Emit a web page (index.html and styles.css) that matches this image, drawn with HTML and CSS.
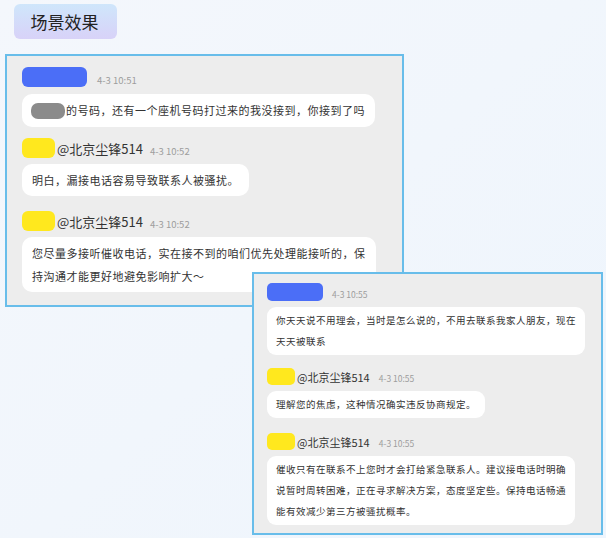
FILE: index.html
```html
<!DOCTYPE html>
<html lang="zh">
<head>
<meta charset="utf-8">
<link rel="stylesheet" href="styles.css">
</head>
<body>
<div class="page">
  <div class="title">场景效果</div>

  <div class="panel p1">
    <div class="msg">
      <div class="head"><span class="pill blue"></span><span class="time">4-3 10:51</span></div>
      <div class="bubble"><span class="mask"></span>的号码，还有一个座机号码打过来的我没接到，你接到了吗</div>
    </div>
    <div class="msg">
      <div class="head"><span class="pill yellow"></span><span class="name">@北京尘锋514</span><span class="time">4-3 10:52</span></div>
      <div class="bubble">明白，漏接电话容易导致联系人被骚扰。</div>
    </div>
    <div class="msg">
      <div class="head"><span class="pill yellow"></span><span class="name">@北京尘锋514</span><span class="time">4-3 10:52</span></div>
      <div class="bubble">您尽量多接听催收电话，实在接不到的咱们优先处理能接听的，保<br>持沟通才能更好地避免影响扩大～</div>
    </div>
  </div>

  <div class="panel p2">
    <div class="msg">
      <div class="head"><span class="pill blue"></span><span class="time">4-3 10:55</span></div>
      <div class="bubble">你天天说不用理会，当时是怎么说的，不用去联系我家人朋友，现在<br>天天被联系</div>
    </div>
    <div class="msg">
      <div class="head"><span class="pill yellow"></span><span class="name">@北京尘锋514</span><span class="time">4-3 10:55</span></div>
      <div class="bubble">理解您的焦虑，这种情况确实违反协商规定。</div>
    </div>
    <div class="msg">
      <div class="head"><span class="pill yellow"></span><span class="name">@北京尘锋514</span><span class="time">4-3 10:55</span></div>
      <div class="bubble">催收只有在联系不上您时才会打给紧急联系人。建议接电话时明确<br>说暂时周转困难，正在寻求解决方案，态度坚定些。保持电话畅通<br>能有效减少第三方被骚扰概率。</div>
    </div>
  </div>
</div>
</body>
</html>
```

FILE: styles.css
```css
* { box-sizing: border-box; }
html, body {
  margin: 0;
  padding: 0;
}
body {
  width: 606px;
  height: 538px;
  overflow: hidden;
  background: linear-gradient(135deg, #f4f7fc 0%, #f1f6fc 50%, #eef5fd 100%);
  font-family: "Noto Sans CJK SC", "Noto Sans", sans-serif;
  color: #333;
}
.page {
  display: flow-root;
}
.title {
  margin: 4px 0 0 14px;
  width: 103px;
  height: 35px;
  border-radius: 6px;
  background: linear-gradient(180deg, #cfe6fb 0%, #d8d2f8 100%);
  display: flex;
  align-items: center;
  justify-content: center;
  font-size: 17px;
  color: #222;
  padding-right: 2px;
}
.panel {
  border: 2px solid #68bdea;
  background: #ededed;
  display: flex;
  flex-direction: column;
  align-items: flex-start;
}
.p1 {
  margin: 15px 0 0 5px;
  width: 399px;
  padding: 11px 15px 13px;
}
.p2 {
  position: relative;
  z-index: 1;
  margin: -35px 0 0 252px;
  width: 351px;
  padding: 9px 13px 8px;
}
.msg {
  display: flex;
  flex-direction: column;
  align-items: flex-start;
}
.p1 .msg:nth-child(2) { margin-top: 11px; }
.p1 .msg:nth-child(3) { margin-top: 15px; }
.p2 .msg:nth-child(2) { margin-top: 13px; }
.p2 .msg:nth-child(3) { margin-top: 15px; }
.head {
  display: flex;
  align-items: flex-end;
}
.pill {
  display: block;
  border-radius: 6px;
}
.blue { background: #4b6ef7; }
.yellow { background: #ffe81e; }
.time {
  color: #9d9d9d;
  white-space: nowrap;
}
.name {
  color: #333;
  white-space: nowrap;
}
.bubble {
  background: #fff;
  white-space: nowrap;
  color: #333;
}
.mask {
  display: inline-block;
  vertical-align: middle;
  width: 34px;
  height: 16px;
  border-radius: 7px;
  background: #8b8b8b;
  margin: -2px 1px 0 -1px;
}

/* panel 1 sizes */
.p1 .head { margin-bottom: 6px; }
.p1 .msg:first-child .head { margin-bottom: 7px; }
.p1 .blue { width: 65px; height: 20px; }
.p1 .yellow { width: 33px; height: 20px; }
.p1 .name { font-size: 13px; line-height: 18px; margin-left: 2px; }
.p1 .time { font-size: 9.5px; line-height: 14px; margin-left: 7px; }
.p1 .blue + .time { margin-left: 10px; }
.p1 .bubble {
  font-size: 11px;
  letter-spacing: 0.5px;
  line-height: 22.5px;
  padding: 5px 10px;
  border-radius: 10px;
}

/* panel 2 sizes */
.p2 .head { margin-bottom: 6px; }
.p2 .blue { width: 56px; height: 18px; border-radius: 5px; }
.p2 .yellow { width: 28px; height: 17px; border-radius: 5px; }
.p2 .name { font-size: 11px; line-height: 16px; margin-left: 2px; }
.p2 .time { font-size: 8.5px; line-height: 13px; margin-left: 9px; }
.p2 .bubble {
  font-size: 9.5px;
  letter-spacing: 0.5px;
  line-height: 21px;
  padding: 3px 9px;
  border-radius: 9px;
}
```
